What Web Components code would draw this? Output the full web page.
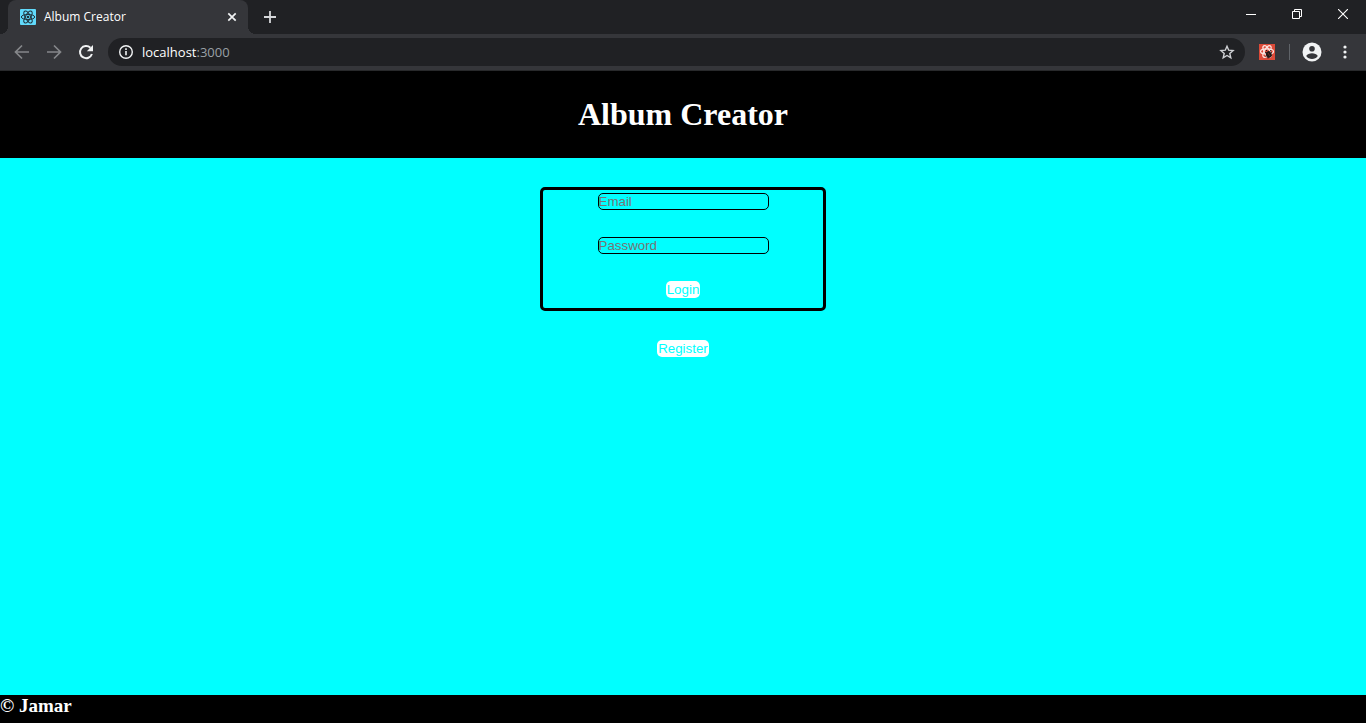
<!DOCTYPE html>
<html lang="en">
<head>
<meta charset="utf-8">
<title>Album Creator</title>
<style>
html, body { height: 100%; margin: 0; }
body { display: flex; flex-direction: column; background: #0ff; font-family: "Liberation Serif", "Times New Roman", serif; }
album-page { flex: 1; }
</style>
</head>
<body>
<browser-chrome>
  <browser-tab slot="tab">Album Creator</browser-tab>
  <address-bar slot="address" host="localhost" port=":3000"></address-bar>
</browser-chrome>
<album-page>
  <album-header slot="header">Album Creator</album-header>
  <login-form></login-form>
  <pill-button>Register</pill-button>
  <album-footer slot="footer">© Jamar</album-footer>
</album-page>

<script>
const define = (name, html) => {
  const template = document.createElement('template');
  template.innerHTML = html;
  customElements.define(name, class extends HTMLElement {
    constructor() {
      super();
      this.attachShadow({ mode: 'open' }).append(template.content.cloneNode(true));
    }
    connectedCallback() {
      for (const part of this.shadowRoot.querySelectorAll('[data-attr]'))
        part.textContent = this.getAttribute(part.dataset.attr);
    }
  });
};

define('browser-tab', `
<style>
:host { display: flex; align-items: center; box-sizing: border-box; position: relative; width: 240px; height: 34px; padding: 0 8px 0 12px; gap: 8px; background: #35363a; border-radius: 8px 8px 0 0; color: #fff; font: 12px/16px "Open Sans", "Noto Sans", sans-serif; }
:host::before, :host::after { content: ""; position: absolute; bottom: 0; width: 8px; height: 8px; }
:host::before { right: 100%; background: radial-gradient(circle at 0 0, transparent 8px, #35363a 8px); }
:host::after { left: 100%; background: radial-gradient(circle at 100% 0, transparent 8px, #35363a 8px); }
span { flex: 1; white-space: nowrap; }
button { display: flex; padding: 0; border: 0; background: none; }
</style>
<svg width="16" height="16" viewBox="0 0 16 16" aria-hidden="true"><rect width="16" height="16" rx="1" fill="#61dafb"/><g fill="none" stroke="#20323b"><ellipse cx="8" cy="8" rx="6.7" ry="2.6"/><ellipse cx="8" cy="8" rx="6.7" ry="2.6" transform="rotate(60 8 8)"/><ellipse cx="8" cy="8" rx="6.7" ry="2.6" transform="rotate(120 8 8)"/></g><circle cx="8" cy="8" r="1.3" fill="#20323b"/></svg>
<span><slot></slot></span>
<button aria-label="Close tab"><svg width="16" height="16" viewBox="0 0 16 16"><path d="M4.3 4.3l7.4 7.4M11.7 4.3l-7.4 7.4" stroke="#f1f3f4" stroke-width="1.7"/></svg></button>`);

define('address-bar', `
<style>
:host { display: flex; align-items: center; box-sizing: border-box; height: 28px; padding: 0 10px; gap: 8px; border-radius: 14px; background: #202124; color: #fff; font: 13px "Open Sans", "Noto Sans", sans-serif; }
.url { flex: 1; white-space: nowrap; }
.port { color: #9aa0a6; }
button { display: flex; padding: 0; border: 0; background: none; }
</style>
<svg width="16" height="16" viewBox="0 0 16 16" fill="none" stroke="#f1f3f4" aria-hidden="true"><circle cx="8" cy="8" r="6.3" stroke-width="1.4"/><path d="M8 7v4.3M8 4.3v1.6" stroke-width="1.6"/></svg>
<div class="url"><span data-attr="host"></span><span class="port" data-attr="port"></span></div>
<button aria-label="Bookmark this page"><svg width="16" height="16" viewBox="0 0 16 16"><path d="M8 2.2l1.7 4 4.4.4-3.3 2.9 1 4.3L8 11.5l-3.8 2.3 1-4.3-3.3-2.9 4.4-.4z" fill="none" stroke="#d0d2d5" stroke-width="1.4"/></svg></button>`);

define('browser-chrome', `
<style>
:host { display: block; background: #35363a; border-bottom: 1px solid #28292b; }
.tabs { display: flex; align-items: center; height: 34px; padding-left: 8px; background: #202124; }
.windows { display: flex; align-self: flex-start; margin-left: auto; }
.windows button { width: 46px; height: 28px; }
button { display: flex; align-items: center; justify-content: center; padding: 0; border: 0; background: none; }
.new { width: 28px; height: 28px; margin-left: 8px; }
.tools { display: flex; align-items: center; height: 36px; padding: 0 5px 0 6px; }
.tools > button { width: 32px; height: 28px; }
.nav { display: flex; }
.nav button { width: 32px; height: 28px; }
slot[name=address] { display: block; flex: 1; margin: 0 6px; }
.rule { width: 1px; height: 16px; margin: 0 6px; background: #5f6368; }
.tools > .menu { width: 33px; }
</style>
<div class="tabs">
  <slot name="tab"></slot>
  <button class="new" aria-label="New tab"><svg width="14" height="14" viewBox="0 0 14 14"><path d="M7 1v12M1 7h12" stroke="#d5d7da" stroke-width="1.8"/></svg></button>
  <div class="windows">
    <button aria-label="Minimize"><svg width="10" height="10" viewBox="0 0 10 10"><path d="M0 5.5h10" stroke="#fff"/></svg></button>
    <button aria-label="Restore"><svg width="10" height="10" viewBox="0 0 10 10" fill="none" stroke="#fff"><path d="M.5 2.5h7v7h-7zM2.5 2.5v-2h7v7h-2"/></svg></button>
    <button aria-label="Close"><svg width="10" height="10" viewBox="0 0 10 10"><path d="M0 0l10 10M10 0L0 10" stroke="#fff" stroke-width="1.1"/></svg></button>
  </div>
</div>
<div class="tools">
  <div class="nav">
    <button aria-label="Back"><svg width="16" height="16" viewBox="0 0 16 16"><path d="M15 8H2M8 1.5L1.5 8 8 14.5" fill="none" stroke="#85878a" stroke-width="1.7"/></svg></button>
    <button aria-label="Forward"><svg width="16" height="16" viewBox="0 0 16 16"><path d="M1 8h13M8 1.5L14.5 8 8 14.5" fill="none" stroke="#85878a" stroke-width="1.7"/></svg></button>
    <button aria-label="Reload"><svg width="16" height="16" viewBox="0 0 16 16"><path d="M13.9 10A6.1 6.1 0 1 1 12.4 3.7" fill="none" stroke="#f1f3f4" stroke-width="2"/><path d="M15 1v6.2H8.8z" fill="#f1f3f4"/></svg></button>
  </div>
  <slot name="address"></slot>
  <button class="ext" aria-label="React Developer Tools"><svg width="16" height="16" viewBox="0 0 16 16"><rect width="16" height="16" fill="#dc4a38"/><g fill="none" stroke="#fbe3df" stroke-width="1.2"><ellipse cx="8" cy="7.5" rx="6.5" ry="2.7"/><ellipse cx="8" cy="7.5" rx="6.5" ry="2.7" transform="rotate(60 8 7.5)"/><ellipse cx="8" cy="7.5" rx="6.5" ry="2.7" transform="rotate(120 8 7.5)"/></g><ellipse cx="9.8" cy="10.5" rx="2.7" ry="3.4" fill="#231917" transform="rotate(-25 9.8 10.5)"/><path d="M6 8.5l7 3M6.5 12.5l6.5-4M8 7l-1-1M11 7.5l1-1.5M9 13l0 1.5" stroke="#231917"/><path d="M9 9l2 3" stroke="#8a3328" stroke-width=".7"/></svg></button>
  <span class="rule"></span>
  <button aria-label="Profile"><svg width="20" height="20" viewBox="0 0 20 20"><circle cx="10" cy="10" r="9.5" fill="#f1f3f4"/><circle cx="10" cy="6.7" r="2.8" fill="#35363a"/><path d="M4.2 13.9c1-1.7 3.3-2.6 5.8-2.6s4.8.9 5.8 2.6a7 7 0 0 1-11.6 0z" fill="#35363a"/></svg></button>
  <button class="menu" aria-label="Menu"><svg width="4" height="16" viewBox="0 0 4 16" fill="#f1f3f4"><circle cx="2" cy="3" r="1.6"/><circle cx="2" cy="8" r="1.6"/><circle cx="2" cy="13" r="1.6"/></svg></button>
</div>`);

define('album-header', `
<style>
:host { display: block; padding: 25px 0; background: #000; color: #fff; text-align: center; }
h1 { margin: 0; font-size: 32px; line-height: 37px; }
</style>
<h1><slot></slot></h1>`);

define('album-footer', `
<style>
:host { display: block; padding-bottom: 6px; background: #000; color: #fff; }
h3 { margin: 0; font-size: 19px; line-height: 22px; }
</style>
<h3><slot></slot></h3>`);

define('pill-button', `
<style>
:host { display: block; }
button { display: block; height: 17px; padding: 0 1px; border: 0; border-radius: 5px; background: #fff; color: #0ff; font-family: "Liberation Sans", Arial, sans-serif; line-height: 17px; }
</style>
<button type="button"><slot></slot></button>`);

define('login-form', `
<style>
:host { display: block; box-sizing: border-box; width: 286px; border: 3px solid #000; border-radius: 5px; }
form { display: flex; flex-direction: column; align-items: center; gap: 27px; padding: 3px 0 10px; }
input { box-sizing: border-box; width: 171px; height: 17px; padding: 0; border: 1px solid #000; border-radius: 5px; background: transparent; font-family: "Liberation Sans", Arial, sans-serif; }
input::placeholder { color: #757575; }
</style>
<form>
  <input type="email" placeholder="Email" aria-label="Email">
  <input type="password" placeholder="Password" aria-label="Password">
  <pill-button>Login</pill-button>
</form>`);

define('album-page', `
<style>
:host { display: flex; flex-direction: column; background: #0ff; }
main { flex: 1; display: flex; flex-direction: column; align-items: center; gap: 29px; padding-top: 29px; }
</style>
<slot name="header"></slot>
<main><slot></slot></main>
<slot name="footer"></slot>`);
</script>
</body>
</html>
